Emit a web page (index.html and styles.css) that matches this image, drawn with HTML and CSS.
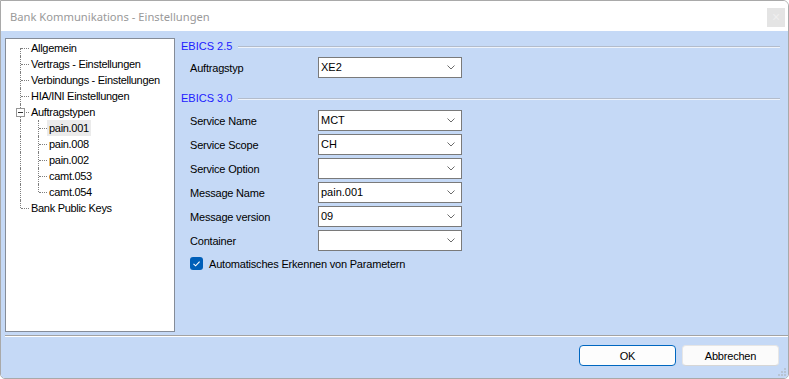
FILE: index.html
```html
<!DOCTYPE html>
<html lang="de">
<head>
<meta charset="utf-8">
<title>Bank Kommunikations - Einstellungen</title>
<link rel="stylesheet" href="styles.css">
</head>
<body>
<div class="window">
  <div class="titlebar">
    <span class="title">Bank Kommunikations - Einstellungen</span>
    <span class="close">×</span>
  </div>
  <div class="client">
    <div class="main">
      <div class="tree">
        <div class="row"><span class="cell first"></span><span class="label">Allgemein</span></div>
        <div class="row"><span class="cell tee"></span><span class="label">Vertrags - Einstellungen</span></div>
        <div class="row"><span class="cell tee"></span><span class="label">Verbindungs - Einstellungen</span></div>
        <div class="row"><span class="cell tee"></span><span class="label">HIA/INI Einstellungen</span></div>
        <div class="row"><span class="cell tee"><span class="toggle"></span></span><span class="label">Auftragstypen</span></div>
        <div class="row"><span class="cell pipe"></span><span class="cell tee"></span><span class="label selected">pain.001</span></div>
        <div class="row"><span class="cell pipe"></span><span class="cell tee"></span><span class="label">pain.008</span></div>
        <div class="row"><span class="cell pipe"></span><span class="cell tee"></span><span class="label">pain.002</span></div>
        <div class="row"><span class="cell pipe"></span><span class="cell tee"></span><span class="label">camt.053</span></div>
        <div class="row"><span class="cell pipe"></span><span class="cell last"></span><span class="label">camt.054</span></div>
        <div class="row"><span class="cell last"></span><span class="label">Bank Public Keys</span></div>
      </div>
      <div class="panel">
        <div class="group-head head-first">EBICS 2.5</div>
        <div class="field field-first">
          <span class="field-label">Auftragstyp</span>
          <span class="select"><span class="value">XE2</span><svg class="chev" width="8" height="5" viewBox="0 0 8 5"><polyline points="0.5,0.5 4,4 7.5,0.5" fill="none" stroke="#6b6b6b" stroke-width="1"/></svg></span>
        </div>
        <div class="group-head head-second">EBICS 3.0</div>
        <div class="field field-first2">
          <span class="field-label">Service Name</span>
          <span class="select"><span class="value">MCT</span><svg class="chev" width="8" height="5" viewBox="0 0 8 5"><polyline points="0.5,0.5 4,4 7.5,0.5" fill="none" stroke="#6b6b6b" stroke-width="1"/></svg></span>
        </div>
        <div class="field">
          <span class="field-label">Service Scope</span>
          <span class="select"><span class="value">CH</span><svg class="chev" width="8" height="5" viewBox="0 0 8 5"><polyline points="0.5,0.5 4,4 7.5,0.5" fill="none" stroke="#6b6b6b" stroke-width="1"/></svg></span>
        </div>
        <div class="field">
          <span class="field-label">Service Option</span>
          <span class="select"><span class="value"></span><svg class="chev" width="8" height="5" viewBox="0 0 8 5"><polyline points="0.5,0.5 4,4 7.5,0.5" fill="none" stroke="#6b6b6b" stroke-width="1"/></svg></span>
        </div>
        <div class="field">
          <span class="field-label">Message Name</span>
          <span class="select"><span class="value">pain.001</span><svg class="chev" width="8" height="5" viewBox="0 0 8 5"><polyline points="0.5,0.5 4,4 7.5,0.5" fill="none" stroke="#6b6b6b" stroke-width="1"/></svg></span>
        </div>
        <div class="field">
          <span class="field-label">Message version</span>
          <span class="select"><span class="value">09</span><svg class="chev" width="8" height="5" viewBox="0 0 8 5"><polyline points="0.5,0.5 4,4 7.5,0.5" fill="none" stroke="#6b6b6b" stroke-width="1"/></svg></span>
        </div>
        <div class="field">
          <span class="field-label">Container</span>
          <span class="select"><span class="value"></span><svg class="chev" width="8" height="5" viewBox="0 0 8 5"><polyline points="0.5,0.5 4,4 7.5,0.5" fill="none" stroke="#6b6b6b" stroke-width="1"/></svg></span>
        </div>
        <div class="check-row">
          <span class="checkbox"><svg width="13" height="13" viewBox="0 0 13 13"><polyline points="3.5,6.8 5.6,8.8 9.6,4.6" fill="none" stroke="#ffffff" stroke-width="1.1"/></svg></span>
          <span class="check-label">Automatisches Erkennen von Parametern</span>
        </div>
      </div>
    </div>
    <div class="sep"></div>
    <div class="footer">
      <button class="btn btn-default">OK</button>
      <button class="btn">Abbrechen</button>
    </div>
    <svg class="grip" width="8" height="8" viewBox="0 0 8 8"><g fill="#b8c4d4"><rect x="6" y="0" width="2" height="2"/><rect x="3" y="3" width="2" height="2"/><rect x="6" y="3" width="2" height="2"/><rect x="0" y="6" width="2" height="2"/><rect x="3" y="6" width="2" height="2"/><rect x="6" y="6" width="2" height="2"/></g></svg>
  </div>
</div>
</body>
</html>
```

FILE: styles.css
```css
html, body {
  margin: 0;
  padding: 0;
  background: #ffffff;
}

.window {
  width: 789px;
  height: 379px;
  box-sizing: border-box;
  border: 1px solid #a9a9a9;
  border-radius: 0 6px 5px 5px;
  overflow: hidden;
  display: flex;
  flex-direction: column;
  font-family: "Liberation Sans", Arial, sans-serif;
  font-size: 11px;
  color: #000000;
}

.titlebar {
  height: 30px;
  flex: none;
  background: #ffffff;
  display: flex;
  align-items: center;
  justify-content: space-between;
  padding: 0 3px 0 9px;
}

.title {
  font-family: "Noto Sans", "Open Sans", sans-serif;
  font-size: 11.2px;
  color: #999999;
  margin-top: 1px;
}

.close {
  width: 18px;
  height: 19px;
  margin-top: 3px;
  background: #e4e4e4;
  color: #efefef;
  font-size: 14px;
  line-height: 19px;
  text-align: center;
}

.client {
  flex: 1;
  background: #c5d9f6;
  display: flex;
  flex-direction: column;
  position: relative;
}

.main {
  display: flex;
  gap: 6px;
  padding: 7px 8px 3px 4px;
}

.tree {
  width: 170px;
  height: 294px;
  flex: none;
  box-sizing: border-box;
  border: 1px solid #858c98;
  background: #ffffff;
  padding: 1px 0 0 5px;
  letter-spacing: -0.3px;
}

.row {
  display: flex;
  align-items: center;
  height: 16px;
}

.cell {
  width: 18px;
  height: 16px;
  flex: none;
  position: relative;
}

.cell::before {
  content: "";
  position: absolute;
  left: 9px;
  top: 0;
  bottom: 0;
  border-left: 1px dotted #7e7e7e;
}

.cell::after {
  content: "";
  position: absolute;
  left: 10px;
  right: 0;
  top: 8px;
  border-top: 1px dotted #7e7e7e;
}

.cell.first::before {
  top: 8px;
}

.cell.last::before {
  bottom: 8px;
}

.cell.pipe::after {
  display: none;
}

.toggle {
  position: absolute;
  left: 5px;
  top: 4px;
  width: 9px;
  height: 9px;
  box-sizing: border-box;
  border: 1px solid #959595;
  background: #ffffff;
  z-index: 1;
}

.toggle::before {
  content: "";
  position: absolute;
  left: 1px;
  top: 3px;
  width: 5px;
  height: 1px;
  background: #333333;
}

.label {
  padding: 0 2px;
  line-height: 16px;
  white-space: nowrap;
}

.label.selected {
  background: #ebebeb;
}

.panel {
  flex: 1;
  display: flex;
  flex-direction: column;
}

.group-head {
  display: flex;
  align-items: center;
  height: 16px;
  color: #2020ff;
  gap: 6px;
}

.group-head::after {
  content: "";
  flex: 1;
  height: 0;
  border-top: 1px solid #b3bccb;
  border-bottom: 1px solid #eef3fb;
  margin-top: 1px;
}

.head-second {
  margin-top: 12px;
}

.field {
  display: flex;
  align-items: center;
  height: 21px;
  padding-left: 9px;
  margin-top: 3px;
}

.field-first2 {
  margin-top: 4px;
}

.field-label {
  width: 128px;
  flex: none;
  letter-spacing: -0.2px;
}

.select {
  width: 144px;
  height: 21px;
  box-sizing: border-box;
  border: 1px solid #7a7a7a;
  background: #ffffff;
  display: flex;
  align-items: center;
  justify-content: space-between;
  padding: 0 6px 0 2px;
}

.value {
  margin-top: -2px;
}

.chev {
  display: block;
}

.check-row {
  display: flex;
  align-items: center;
  height: 13px;
  margin-top: 6px;
  padding-left: 9px;
}

.checkbox {
  width: 13px;
  height: 13px;
  border-radius: 3px;
  background: #005fb8;
  display: block;
  flex: none;
}

.checkbox svg {
  display: block;
}

.check-label {
  margin-left: 6px;
  letter-spacing: -0.2px;
}

.sep {
  height: 0;
  margin-left: 4px;
  border-top: 1px solid #a3a3a3;
  border-bottom: 1px solid #ffffff;
}

.footer {
  flex: 1;
  display: flex;
  justify-content: flex-end;
  align-items: flex-start;
  gap: 6px;
  padding: 8px 9px 0 0;
}

.btn {
  width: 97px;
  height: 21px;
  box-sizing: border-box;
  border: 1px solid #e6e6e6;
  border-bottom-color: #d6d6d6;
  border-radius: 4px;
  background: #fbfbfb;
  font-family: "Liberation Sans", Arial, sans-serif;
  font-size: 11px;
  letter-spacing: -0.2px;
  color: #000000;
  padding: 0;
}

.btn-default {
  border: 1px solid #0067c0;
  background: #fdfdfd;
}

.grip {
  position: absolute;
  right: 2px;
  bottom: 2px;
}
```
